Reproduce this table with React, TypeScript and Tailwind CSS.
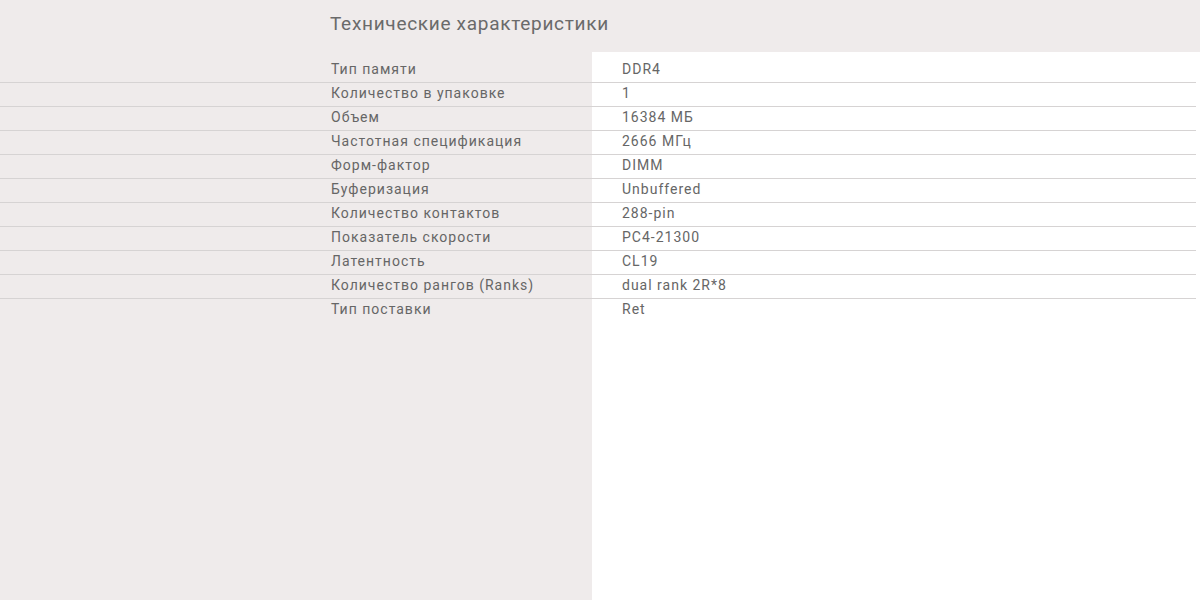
import React from "react";

const rows: [string, string][] = [
  ["Тип памяти", "DDR4"],
  ["Количество в упаковке", "1"],
  ["Объем", "16384 МБ"],
  ["Частотная спецификация", "2666 МГц"],
  ["Форм-фактор", "DIMM"],
  ["Буферизация", "Unbuffered"],
  ["Количество контактов", "288-pin"],
  ["Показатель скорости", "PC4-21300"],
  ["Латентность", "CL19"],
  ["Количество рангов (Ranks)", "dual rank 2R*8"],
  ["Тип поставки", "Ret"],
];

export default function App() {
  return (
    <div
      className="w-[1200px] h-[600px] bg-[#efebeb] flex flex-col overflow-hidden text-[#666666]"
      style={{ fontFamily: "Roboto, 'Noto Sans', sans-serif" }}
    >
      <div className="h-[52px] shrink-0 pl-[330px] pt-[11px]">
        <h1 className="text-[19px] leading-[26px] tracking-[0.7px] text-[#6a6a6a]">
          Технические характеристики
        </h1>
      </div>
      <div className="flex flex-1">
        <div className="w-[592px] shrink-0 pt-[7px]">
          {rows.map(([label], i) => (
            <div
              key={label}
              className={`h-[24px] pl-[331px] text-[14px] leading-[21px] tracking-[1px] ${
                i < rows.length - 1 ? "border-b border-[#d6d3d3]" : ""
              }`}
            >
              {label}
            </div>
          ))}
        </div>
        <div className="flex-1 bg-white pt-[7px] pr-[4px]">
          {rows.map(([label, value], i) => (
            <div
              key={label}
              className={`h-[24px] pl-[30px] text-[14px] leading-[21px] tracking-[1px] ${
                i < rows.length - 1 ? "border-b border-[#d6d3d3]" : ""
              }`}
            >
              {value}
            </div>
          ))}
        </div>
      </div>
    </div>
  );
}
